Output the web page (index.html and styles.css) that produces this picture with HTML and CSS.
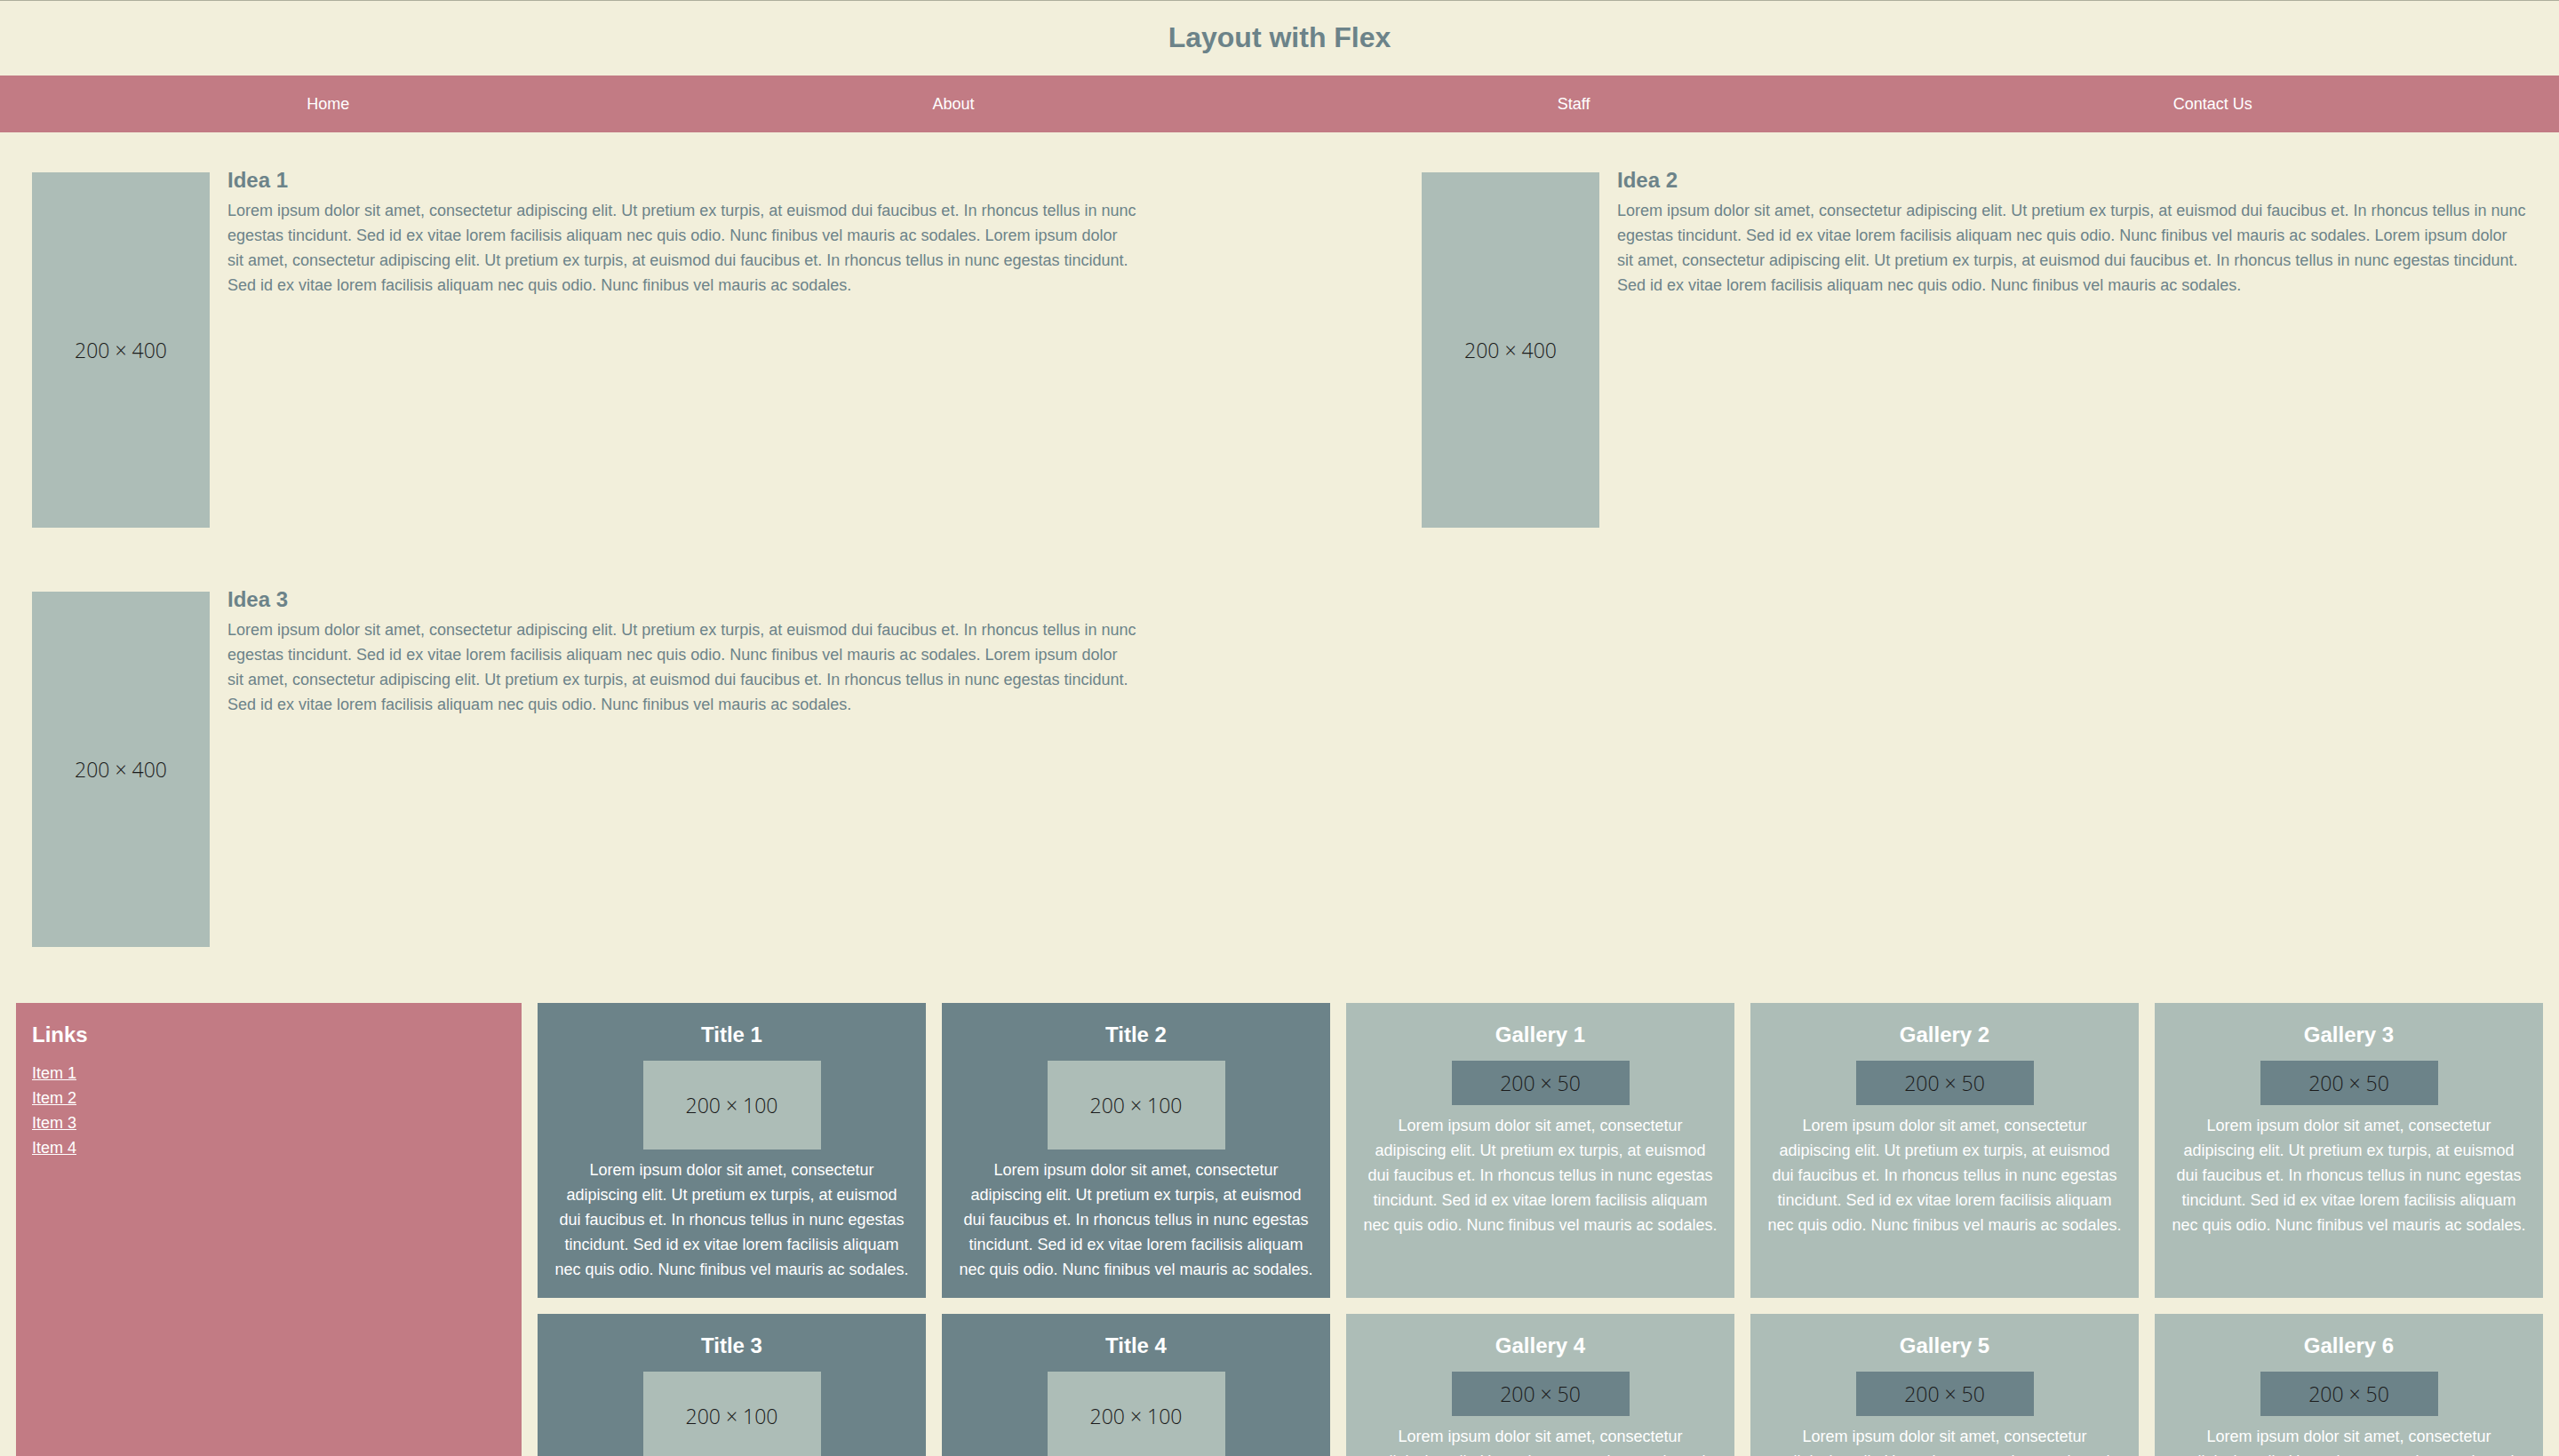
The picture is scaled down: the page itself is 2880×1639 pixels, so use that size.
FILE: index.html
```html
<!DOCTYPE html>
<html lang="en">
<head>
<meta charset="utf-8">
<title>Layout with Flex</title>
<link rel="stylesheet" href="styles.css">
</head>
<body>
<div class="topline"></div>
<header class="site-header"><h1>Layout with Flex</h1></header>
<nav class="nav">
  <a href="#">Home</a>
  <a href="#">About</a>
  <a href="#">Staff</a>
  <a href="#">Contact Us</a>
</nav>
<section class="ideas">
  <article class="idea">
    <div class="ph ph-tall">200 × 400</div>
    <div class="idea-text">
      <h2>Idea 1</h2>
      <p>Lorem ipsum dolor sit amet, consectetur adipiscing elit. Ut pretium ex turpis, at euismod dui faucibus et. In rhoncus tellus in nunc egestas tincidunt. Sed id ex vitae lorem facilisis aliquam nec quis odio. Nunc finibus vel mauris ac sodales. Lorem ipsum dolor sit amet, consectetur adipiscing elit. Ut pretium ex turpis, at euismod dui faucibus et. In rhoncus tellus in nunc egestas tincidunt. Sed id ex vitae lorem facilisis aliquam nec quis odio. Nunc finibus vel mauris ac sodales.</p>
    </div>
  </article>
  <article class="idea">
    <div class="ph ph-tall">200 × 400</div>
    <div class="idea-text">
      <h2>Idea 2</h2>
      <p>Lorem ipsum dolor sit amet, consectetur adipiscing elit. Ut pretium ex turpis, at euismod dui faucibus et. In rhoncus tellus in nunc egestas tincidunt. Sed id ex vitae lorem facilisis aliquam nec quis odio. Nunc finibus vel mauris ac sodales. Lorem ipsum dolor sit amet, consectetur adipiscing elit. Ut pretium ex turpis, at euismod dui faucibus et. In rhoncus tellus in nunc egestas tincidunt. Sed id ex vitae lorem facilisis aliquam nec quis odio. Nunc finibus vel mauris ac sodales.</p>
    </div>
  </article>
  <article class="idea">
    <div class="ph ph-tall">200 × 400</div>
    <div class="idea-text">
      <h2>Idea 3</h2>
      <p>Lorem ipsum dolor sit amet, consectetur adipiscing elit. Ut pretium ex turpis, at euismod dui faucibus et. In rhoncus tellus in nunc egestas tincidunt. Sed id ex vitae lorem facilisis aliquam nec quis odio. Nunc finibus vel mauris ac sodales. Lorem ipsum dolor sit amet, consectetur adipiscing elit. Ut pretium ex turpis, at euismod dui faucibus et. In rhoncus tellus in nunc egestas tincidunt. Sed id ex vitae lorem facilisis aliquam nec quis odio. Nunc finibus vel mauris ac sodales.</p>
    </div>
  </article>
</section>
<section class="bottom">
  <aside class="links">
    <h3>Links</h3>
    <ul>
      <li><a href="#">Item 1</a></li>
      <li><a href="#">Item 2</a></li>
      <li><a href="#">Item 3</a></li>
      <li><a href="#">Item 4</a></li>
    </ul>
  </aside>
  <div class="card dark"><h3>Title 1</h3><div class="ph ph-mid">200 × 100</div><p>Lorem ipsum dolor sit amet, consectetur adipiscing elit. Ut pretium ex turpis, at euismod dui faucibus et. In rhoncus tellus in nunc egestas tincidunt. Sed id ex vitae lorem facilisis aliquam nec quis odio. Nunc finibus vel mauris ac sodales.</p></div>
  <div class="card dark"><h3>Title 2</h3><div class="ph ph-mid">200 × 100</div><p>Lorem ipsum dolor sit amet, consectetur adipiscing elit. Ut pretium ex turpis, at euismod dui faucibus et. In rhoncus tellus in nunc egestas tincidunt. Sed id ex vitae lorem facilisis aliquam nec quis odio. Nunc finibus vel mauris ac sodales.</p></div>
  <div class="card light"><h3>Gallery 1</h3><div class="ph ph-short">200 × 50</div><p>Lorem ipsum dolor sit amet, consectetur adipiscing elit. Ut pretium ex turpis, at euismod dui faucibus et. In rhoncus tellus in nunc egestas tincidunt. Sed id ex vitae lorem facilisis aliquam nec quis odio. Nunc finibus vel mauris ac sodales.</p></div>
  <div class="card light"><h3>Gallery 2</h3><div class="ph ph-short">200 × 50</div><p>Lorem ipsum dolor sit amet, consectetur adipiscing elit. Ut pretium ex turpis, at euismod dui faucibus et. In rhoncus tellus in nunc egestas tincidunt. Sed id ex vitae lorem facilisis aliquam nec quis odio. Nunc finibus vel mauris ac sodales.</p></div>
  <div class="card light"><h3>Gallery 3</h3><div class="ph ph-short">200 × 50</div><p>Lorem ipsum dolor sit amet, consectetur adipiscing elit. Ut pretium ex turpis, at euismod dui faucibus et. In rhoncus tellus in nunc egestas tincidunt. Sed id ex vitae lorem facilisis aliquam nec quis odio. Nunc finibus vel mauris ac sodales.</p></div>
  <div class="card dark"><h3>Title 3</h3><div class="ph ph-mid">200 × 100</div><p>Lorem ipsum dolor sit amet, consectetur adipiscing elit. Ut pretium ex turpis, at euismod dui faucibus et. In rhoncus tellus in nunc egestas tincidunt. Sed id ex vitae lorem facilisis aliquam nec quis odio. Nunc finibus vel mauris ac sodales.</p></div>
  <div class="card dark"><h3>Title 4</h3><div class="ph ph-mid">200 × 100</div><p>Lorem ipsum dolor sit amet, consectetur adipiscing elit. Ut pretium ex turpis, at euismod dui faucibus et. In rhoncus tellus in nunc egestas tincidunt. Sed id ex vitae lorem facilisis aliquam nec quis odio. Nunc finibus vel mauris ac sodales.</p></div>
  <div class="card light"><h3>Gallery 4</h3><div class="ph ph-short">200 × 50</div><p>Lorem ipsum dolor sit amet, consectetur adipiscing elit. Ut pretium ex turpis, at euismod dui faucibus et. In rhoncus tellus in nunc egestas tincidunt. Sed id ex vitae lorem facilisis aliquam nec quis odio. Nunc finibus vel mauris ac sodales.</p></div>
  <div class="card light"><h3>Gallery 5</h3><div class="ph ph-short">200 × 50</div><p>Lorem ipsum dolor sit amet, consectetur adipiscing elit. Ut pretium ex turpis, at euismod dui faucibus et. In rhoncus tellus in nunc egestas tincidunt. Sed id ex vitae lorem facilisis aliquam nec quis odio. Nunc finibus vel mauris ac sodales.</p></div>
  <div class="card light"><h3>Gallery 6</h3><div class="ph ph-short">200 × 50</div><p>Lorem ipsum dolor sit amet, consectetur adipiscing elit. Ut pretium ex turpis, at euismod dui faucibus et. In rhoncus tellus in nunc egestas tincidunt. Sed id ex vitae lorem facilisis aliquam nec quis odio. Nunc finibus vel mauris ac sodales.</p></div>
</section>
</body>
</html>
```
FILE: styles.css
```css
* { box-sizing: border-box; }

html, body {
  margin: 0;
  padding: 0;
}

body {
  background: #f2efdb;
  font-family: "Liberation Sans", Arial, Helvetica, sans-serif;
  font-size: 18px;
  line-height: 28px;
  color: #6c8389;
}

.topline {
  height: 1px;
  background: #aeae9c;
}

.site-header {
  padding: 23px 0 24px;
  text-align: center;
}

.site-header h1 {
  margin: 0;
  font-size: 32px;
  line-height: 37px;
  font-weight: bold;
  color: #6c8389;
}

.nav {
  height: 64px;
  background: #c27b84;
  display: flex;
  align-items: center;
  justify-content: space-around;
  padding: 0 17px;
}

.nav a {
  color: #ffffff;
  text-decoration: none;
  font-size: 18px;
}

.ideas {
  padding: 18px;
  display: flex;
  flex-wrap: wrap;
  justify-content: space-between;
  row-gap: 18px;
}

.idea {
  width: 1280px;
  padding: 27px 18px;
  display: flex;
  align-items: flex-start;
  gap: 20px;
}

.idea-text {
  flex: none;
  width: 1022.65px;
}

.idea-text h2 {
  margin: 0;
  font-size: 24px;
  line-height: 18px;
  font-weight: bold;
  color: #6c8389;
}

.idea-text p {
  margin: 11px 0 0;
}

.ph {
  flex: none;
  display: flex;
  align-items: center;
  justify-content: center;
  font-family: "Open Sans", "DejaVu Sans", sans-serif;
  font-weight: 300;
  font-size: 23px;
  color: #1a1a1a;
}

.ph-tall {
  width: 200px;
  height: 400px;
  background: #adbdb7;
}

.ph-mid {
  width: 200px;
  height: 100px;
  margin: 0 auto;
  background: #adbdb7;
}

.ph-short {
  width: 200px;
  height: 50px;
  margin: 0 auto;
  background: #6c8389;
}

.bottom {
  padding: 18px 18px 18px;
  display: grid;
  grid-template-columns: 569px repeat(5, 1fr);
  gap: 18px;
}

.links {
  grid-row: span 2;
  background: #c27b84;
  padding: 18px;
  color: #ffffff;
}

.links h3,
.card h3 {
  margin: 0 0 11px;
  font-size: 24px;
  line-height: 36px;
  font-weight: bold;
  color: #ffffff;
}

.links ul {
  margin: 0;
  padding: 0;
  list-style: none;
}

.links a {
  color: #ffffff;
  text-decoration: underline;
}

.card {
  padding: 18px;
  text-align: center;
  color: #ffffff;
}

.card.dark {
  background: #6c8389;
}

.card.light {
  background: #adbdb7;
}

.card p {
  margin: 9px 0 0;
}
```
